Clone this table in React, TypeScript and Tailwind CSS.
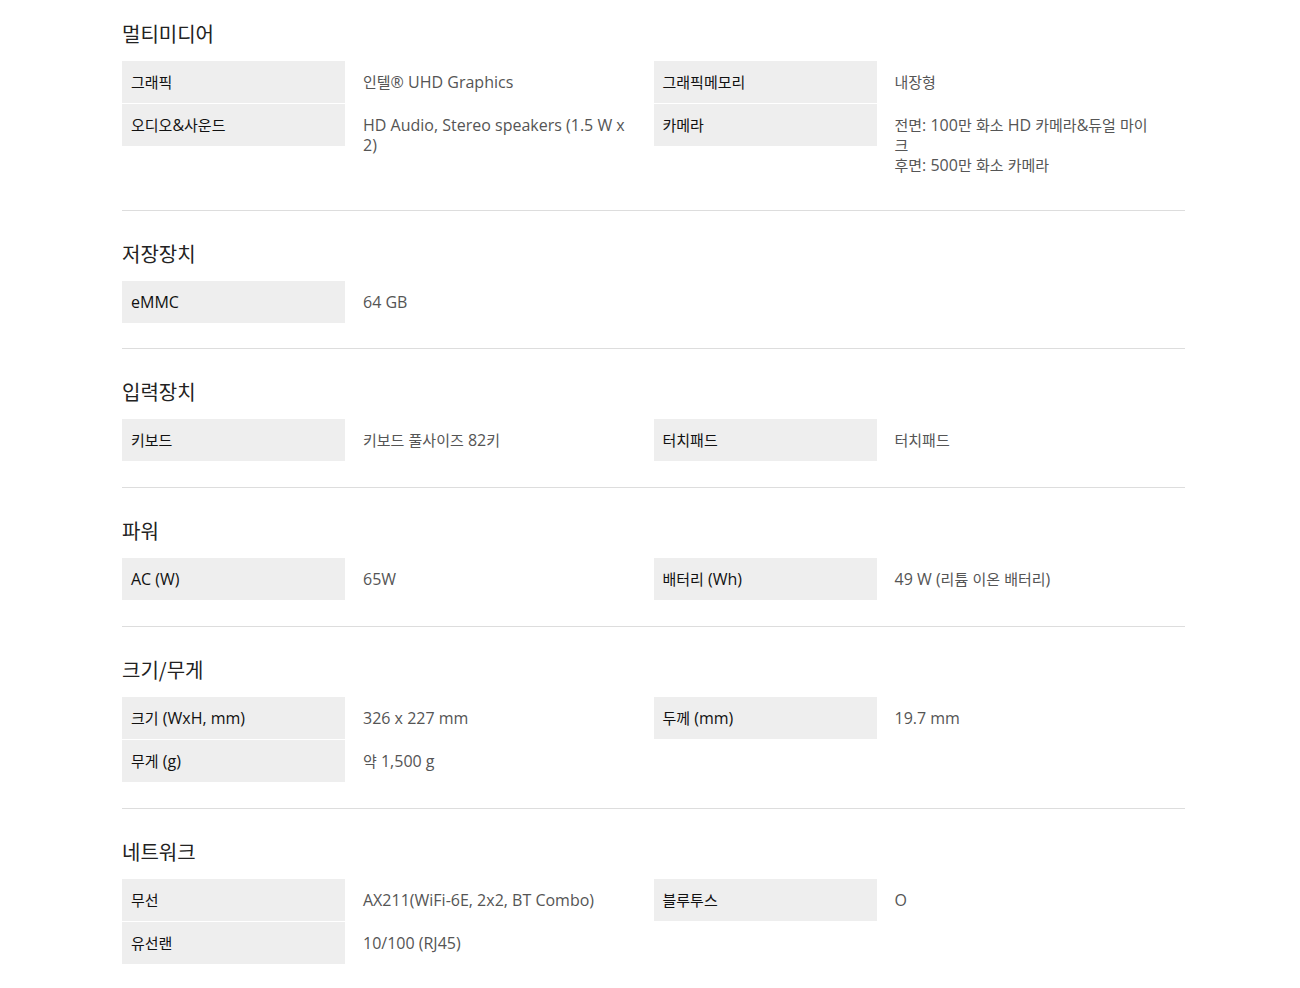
import React from "react";

type Item = { label: string; value: string[] };
type Section = { title: string; items: (Item | null)[] };

const HANGUL = /([\uAC00-\uD7A3\u3131-\u318E]+)/;

function Mixed({ text }: { text: string }) {
  const parts = text.split(HANGUL).filter((p) => p.length > 0);
  return (
    <>
      {parts.map((p, i) =>
        HANGUL.test(p) ? (
          <span key={i} className="text-[15px]">
            {p}
          </span>
        ) : (
          <span key={i} className="text-[16px]">
            {p}
          </span>
        )
      )}
    </>
  );
}

const sections: Section[] = [
  {
    title: "멀티미디어",
    items: [
      { label: "그래픽", value: ["인텔® UHD Graphics"] },
      { label: "그래픽메모리", value: ["내장형"] },
      { label: "오디오&사운드", value: ["HD Audio, Stereo speakers (1.5 W x", "2)"] },
      {
        label: "카메라",
        value: ["전면: 100만 화소 HD 카메라&듀얼 마이", "크", "후면: 500만 화소 카메라"],
      },
    ],
  },
  { title: "저장장치", items: [{ label: "eMMC", value: ["64 GB"] }] },
  {
    title: "입력장치",
    items: [
      { label: "키보드", value: ["키보드 풀사이즈 82키"] },
      { label: "터치패드", value: ["터치패드"] },
    ],
  },
  {
    title: "파워",
    items: [
      { label: "AC (W)", value: ["65W"] },
      { label: "배터리 (Wh)", value: ["49 W (리튬 이온 배터리)"] },
    ],
  },
  {
    title: "크기/무게",
    items: [
      { label: "크기 (WxH, mm)", value: ["326 x 227 mm"] },
      { label: "두께 (mm)", value: ["19.7 mm"] },
      { label: "무게 (g)", value: ["약 1,500 g"] },
      null,
    ],
  },
  {
    title: "네트워크",
    items: [
      { label: "무선", value: ["AX211(WiFi-6E, 2x2, BT Combo)"] },
      { label: "블루투스", value: ["O"] },
      { label: "유선랜", value: ["10/100 (RJ45)"] },
      null,
    ],
  },
];

const sectionPad = [
  "pt-[20px] pb-[24px] border-b border-[#dddddd]",
  "pt-[29px] pb-[25px] border-b border-[#dddddd]",
  "pt-[29px] pb-[26px] border-b border-[#dddddd]",
  "pt-[29px] pb-[26px] border-b border-[#dddddd]",
  "pt-[29px] pb-[26px] border-b border-[#dddddd]",
  "pt-[29px] pb-[20px]",
];

export default function App() {
  return (
    <div
      className="min-h-[988px] bg-white"
      style={{ fontFamily: '"Open Sans", "Noto Sans CJK KR", sans-serif' }}
    >
      <div className="ml-[122px] w-[1063px]">
        {sections.map((s, si) => (
          <section key={s.title} className={sectionPad[si]}>
            <h2
              className="text-[20px] leading-[28px] text-[#222222] font-normal mb-[13px]"
              style={{ fontFamily: '"Noto Sans CJK KR", sans-serif' }}
            >
              {s.title}
            </h2>
            <div className="grid grid-cols-2 gap-y-[1px]">
              {s.items.map((it, i) =>
                it ? (
                  <div key={i} className="flex items-start">
                    <div className="w-[223px] shrink-0 bg-[#eeeeee] px-[9px] py-[11px] leading-[20px] text-[#111111] font-normal whitespace-nowrap">
                      <Mixed text={it.label} />
                    </div>
                    <div className="flex-1 pl-[18px] pr-[18px] py-[11px] leading-[20px] text-[#555555]">
                      {it.value.map((l, li) => (
                        <span key={li} className="block whitespace-nowrap leading-[20px]">
                          <Mixed text={l} />
                        </span>
                      ))}
                    </div>
                  </div>
                ) : (
                  <div key={i} />
                )
              )}
            </div>
          </section>
        ))}
      </div>
    </div>
  );
}
